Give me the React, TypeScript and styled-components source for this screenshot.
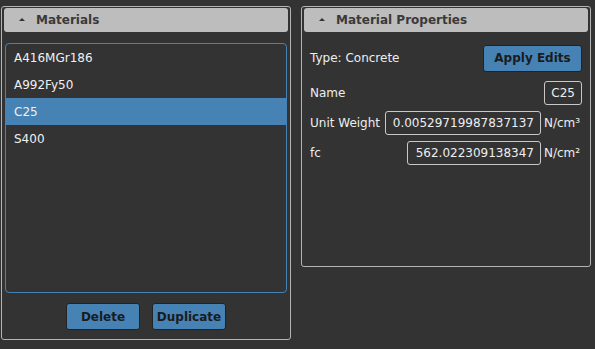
import React, { useState } from "react";
import styled, { createGlobalStyle } from "styled-components";

const Global = createGlobalStyle`
  html, body { margin: 0; padding: 0; background: #333333; }
  body { font-family: "DejaVu Sans", Verdana, sans-serif; font-size: 12px; color: #eeeeee; }
`;

const Page = styled.div`
  display: flex;
  align-items: flex-start;
  gap: 10px;
  padding: 6px 0 0 1px;
  width: 595px;
  height: 349px;
  box-sizing: border-box;
`;

const Panel = styled.div<{ $h: number }>`
  width: 290px;
  height: ${(p) => p.$h}px;
  box-sizing: border-box;
  border: 1px solid #b4b4b4;
  border-radius: 3px;
  padding: 1px 2px 2px 2px;
  display: flex;
  flex-direction: column;
`;

const Header = styled.div`
  height: 24px;
  background: #bdbdbd;
  border-radius: 3px;
  display: flex;
  align-items: center;
  padding-left: 15px;
  gap: 11px;
  color: #3a3a3a;
  font-weight: bold;
  font-size: 12px;
  flex: none;
`;

const Caret = styled.span`
  width: 0;
  height: 0;
  border-left: 3px solid transparent;
  border-right: 3px solid transparent;
  border-bottom: 3px solid #333;
  margin-top: -1px;
`;

const List = styled.div`
  margin: 11px 1px 0 1px;
  height: 250px;
  box-sizing: border-box;
  border: 1px solid #4682b4;
  border-radius: 4px;
  overflow: hidden;
  display: flex;
  flex-direction: column;
`;

const Item = styled.div<{ $sel: boolean }>`
  height: 27px;
  display: flex;
  align-items: center;
  padding-left: 8px;
  background: ${(p) => (p.$sel ? "#4682b4" : "transparent")};
  color: #f0f0f0;
  cursor: pointer;
`;

const ButtonRow = styled.div`
  display: flex;
  justify-content: center;
  gap: 12px;
  margin-top: 10px;
`;

const Button = styled.button<{ $w: number }>`
  width: ${(p) => p.$w}px;
  height: 27px;
  background: #4682b4;
  border: 1px solid #222;
  border-radius: 3px;
  color: #1b1b1b;
  font-family: "DejaVu Sans", Verdana, sans-serif;
  font-weight: bold;
  font-size: 12px;
  padding: 0;
  display: flex;
  align-items: center;
  justify-content: center;
`;

const Props = styled.div`
  padding: 13px 6px 0 6px;
  display: flex;
  flex-direction: column;
  gap: 6px;
`;

const Row = styled.div<{ $h: number; $after?: number }>`
  display: flex;
  align-items: center;
  height: ${(p) => p.$h}px;
  gap: 3px;
  margin-bottom: ${(p) => p.$after ?? 0}px;
`;

const Label = styled.span`
  flex: 1;
  white-space: nowrap;
`;

const Input = styled.input<{ $w: number }>`
  width: ${(p) => p.$w}px;
  height: 24px;
  box-sizing: border-box;
  background: transparent;
  border: 1px solid #c8c8c8;
  border-radius: 3px;
  color: #eeeeee;
  font-family: "DejaVu Sans", Verdana, sans-serif;
  font-size: 12px;
  text-align: right;
  padding: 0 6px;
  outline: none;
`;

const Unit = styled.span`
  width: 38px;
  white-space: nowrap;
`;

const materials = ["A416MGr186", "A992Fy50", "C25", "S400"];

export default function App() {
  const [sel, setSel] = useState("C25");
  return (
    <>
      <Global />
      <Page>
        <Panel $h={334}>
          <Header>
            <Caret />
            Materials
          </Header>
          <List>
            {materials.map((m) => (
              <Item key={m} $sel={m === sel} onClick={() => setSel(m)}>
                {m}
              </Item>
            ))}
          </List>
          <ButtonRow>
            <Button $w={74}>Delete</Button>
            <Button $w={74}>Duplicate</Button>
          </ButtonRow>
        </Panel>
        <Panel $h={261}>
          <Header>
            <Caret />
            Material Properties
          </Header>
          <Props>
            <Row $h={26} $after={4}>
              <Label>Type: Concrete</Label>
              <Button $w={99}>Apply Edits</Button>
            </Row>
            <Row $h={24}>
              <Label>Name</Label>
              <Input $w={38} defaultValue="C25" />
            </Row>
            <Row $h={24}>
              <Label>Unit Weight</Label>
              <Input $w={156} defaultValue="0.00529719987837137" />
              <Unit>N/cm³</Unit>
            </Row>
            <Row $h={24}>
              <Label>fc</Label>
              <Input $w={134} defaultValue="562.022309138347" />
              <Unit>N/cm²</Unit>
            </Row>
          </Props>
        </Panel>
      </Page>
    </>
  );
}
